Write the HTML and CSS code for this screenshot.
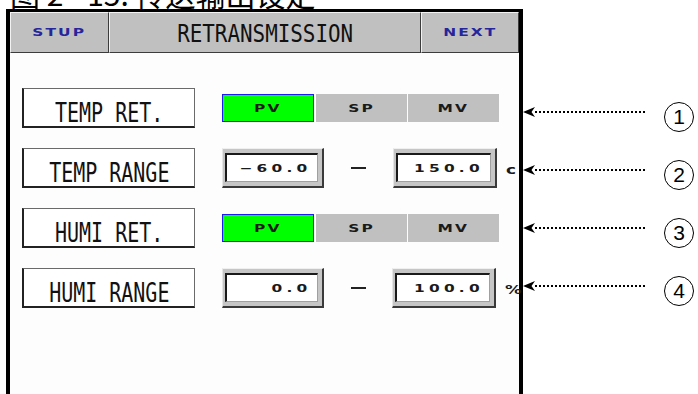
FILE: index.html
```html
<!DOCTYPE HTML>
<html>
<head>
    <meta charset="utf-8">
    <title>Retransmission</title>
    <meta name="viewport" content="width=device-width, initial-scale=1">
    <link rel="stylesheet" href="styles.css">
</head>
<body>

<div class="caption"><span>图 2 - 15. 传送输出设定</span></div>

<div class="page">
    <div class="screen">
        <div class="head">
            <div class="key stup"><span class="lcd blue">STUP</span></div>
            <div class="key title"><span class="name">RETRANSMISSION</span></div>
            <div class="key next"><span class="lcd blue">NEXT</span></div>
        </div>

        <div class="rows">
            <div class="row">
                <div class="label"><span>TEMP RET.</span></div>
                <div class="choice">
                    <div class="opt on"><span class="lcd">PV</span></div>
                    <div class="opt"><span class="lcd">SP</span></div>
                    <div class="opt"><span class="lcd">MV</span></div>
                </div>
            </div>
            <div class="row">
                <div class="label"><span>TEMP RANGE</span></div>
                <div class="field"><div class="field-in"><span class="lcd">&minus;60.0</span></div></div>
                <div class="dash"><i></i></div>
                <div class="field wide"><div class="field-in"><span class="lcd">150.0</span></div></div>
                <div class="unit"><span class="lcd">c</span></div>
            </div>
            <div class="row">
                <div class="label"><span>HUMI RET.</span></div>
                <div class="choice">
                    <div class="opt on"><span class="lcd">PV</span></div>
                    <div class="opt"><span class="lcd">SP</span></div>
                    <div class="opt"><span class="lcd">MV</span></div>
                </div>
            </div>
            <div class="row">
                <div class="label"><span>HUMI RANGE</span></div>
                <div class="field"><div class="field-in"><span class="lcd">0.0</span></div></div>
                <div class="dash"><i></i></div>
                <div class="field wide"><div class="field-in"><span class="lcd">100.0</span></div></div>
                <div class="unit"><span class="lcd">%</span></div>
            </div>
        </div>
    </div>

    <div class="notes">
        <div class="note">
            <svg class="tip" viewBox="0 0 12 10"><path d="M0 5 L12 0 L8.5 5 L12 10 Z"></path></svg>
            <span class="dots"></span>
            <span class="num">1</span>
        </div>
        <div class="note">
            <svg class="tip" viewBox="0 0 12 10"><path d="M0 5 L12 0 L8.5 5 L12 10 Z"></path></svg>
            <span class="dots"></span>
            <span class="num">2</span>
        </div>
        <div class="note">
            <svg class="tip" viewBox="0 0 12 10"><path d="M0 5 L12 0 L8.5 5 L12 10 Z"></path></svg>
            <span class="dots"></span>
            <span class="num">3</span>
        </div>
        <div class="note">
            <svg class="tip" viewBox="0 0 12 10"><path d="M0 5 L12 0 L8.5 5 L12 10 Z"></path></svg>
            <span class="dots"></span>
            <span class="num">4</span>
        </div>
    </div>
</div>

</body>
</html>
```

FILE: styles.css
```css
body {
    margin:0;
    background:#fff;
    font-family:"DejaVu Sans", sans-serif;
    color:#111;
}

/* figure caption, cut off by the top edge */
.caption {
    height:9px;
    overflow:hidden;
    display:flex;
    align-items:flex-end;
    padding-left:10px;
}
.caption span {
    flex:none;
    font:30px/1 "Noto Sans CJK SC", sans-serif;
    color:#000;
    margin-bottom:1px;
    white-space:pre;
}

.page {display:flex; align-items:flex-start;}

.screen {
    flex:none;
    margin-left:6px;
    width:509px;
    height:390px;
    border:4px solid #000;
    border-top-width:3px;
    border-bottom:0;
    background:#fdfdfd;
}

/* header keys */
.head {display:flex; height:41px;}
.key {
    box-sizing:border-box;
    background:#c0c0c0;
    border:1px solid;
    border-color:#f2f2f2 #3c3c3c #3c3c3c #f2f2f2;
    display:flex;align-items:center;justify-content:center;
}
.key.stup {width:99px;}
.key.title {width:312px; padding-top:3px;}
.key.next {width:98px;}
.name {
    display:inline-block;
    font:24px "DejaVu Sans Mono", monospace;
    transform:scaleX(0.87);
    color:#111;
}

/* small wide panel font */
.lcd {
    display:inline-block;
    font-family:"DejaVu Sans", sans-serif;
    font-weight:bold;
    font-size:11px;
    letter-spacing:1.5px;
    transform:scaleX(1.4);
    color:#1a1a1a;
    white-space:pre;
}
.lcd.blue {color:#25259c;}

.rows {padding:35px 0 0 12px;}
.row {display:flex; align-items:center; height:40px; margin-bottom:20px;}

.label {
    flex:none;
    width:173px;height:40px;
    box-sizing:border-box;
    padding-top:9px;
    background:#fff;
    border:1px solid #6a6a6a;
    border-left:2px solid #222;
    border-bottom:2px solid #222;
    display:flex;align-items:center;justify-content:center;
    margin-right:27px;
}
.label span {
    display:inline-block;
    font:27px "DejaVu Sans Mono", monospace;
    transform:scaleX(0.74);
    white-space:pre;
    color:#111;
}

/* PV / SP / MV selector */
.choice {display:flex; height:28px;}
.opt {
    width:91px;
    box-sizing:border-box;
    background:#c0c0c0;
    display:flex;align-items:center;justify-content:center;
}
.opt + .opt {margin-left:1px;}
.opt.on {
    width:92px;
    background:#00ff00;
    border:1px solid #1c1cf0;
    margin-right:1px;
}

/* numeric fields */
.field {
    flex:none;
    width:102px;height:40px;
    box-sizing:border-box;
    background:#c6c6c6;
    border:1px solid;
    border-color:#f0f0f0 #3a3a3a #3a3a3a #e6e6e6;
    border-width:1px 2px 2px 1px;
    padding:4px 4px 4px 2px;
}
.field.wide {width:104px;}
.field-in {
    height:100%;
    box-sizing:border-box;
    background:#fff;
    border:1px solid #a0a0a0;
    border-top:2px solid #1a1a1a;
    border-left:2px solid #1a1a1a;
    display:flex;align-items:center;justify-content:flex-end;
    padding-right:6px;
}
.field-in .lcd {transform-origin:right center; letter-spacing:3px;}

.dash {
    width:69px;
    display:flex;justify-content:center;
}
.dash i {display:block; width:15px; height:2px; background:#222;}

.unit {margin-left:9px;}
.unit .lcd {transform-origin:left center; font-size:12px;}

/* callouts to the right of the panel */
.notes {padding-top:93px;}
.note {display:flex; align-items:flex-start; height:58px;}
.tip {width:12px;height:10px;margin-top:5px;fill:#000;flex:none;}
.dots {
    width:110px;height:2px;
    margin-top:9px;
    background:repeating-linear-gradient(to right, #000 0 2px, transparent 2px 4px);
}
.num {
    flex:none;
    width:28px;height:28px;
    margin-left:19px;
    border:1.5px solid #000;
    border-radius:50%;
    display:flex;align-items:center;justify-content:center;
    font:21px "Liberation Sans", sans-serif;
    color:#000;
}
```
